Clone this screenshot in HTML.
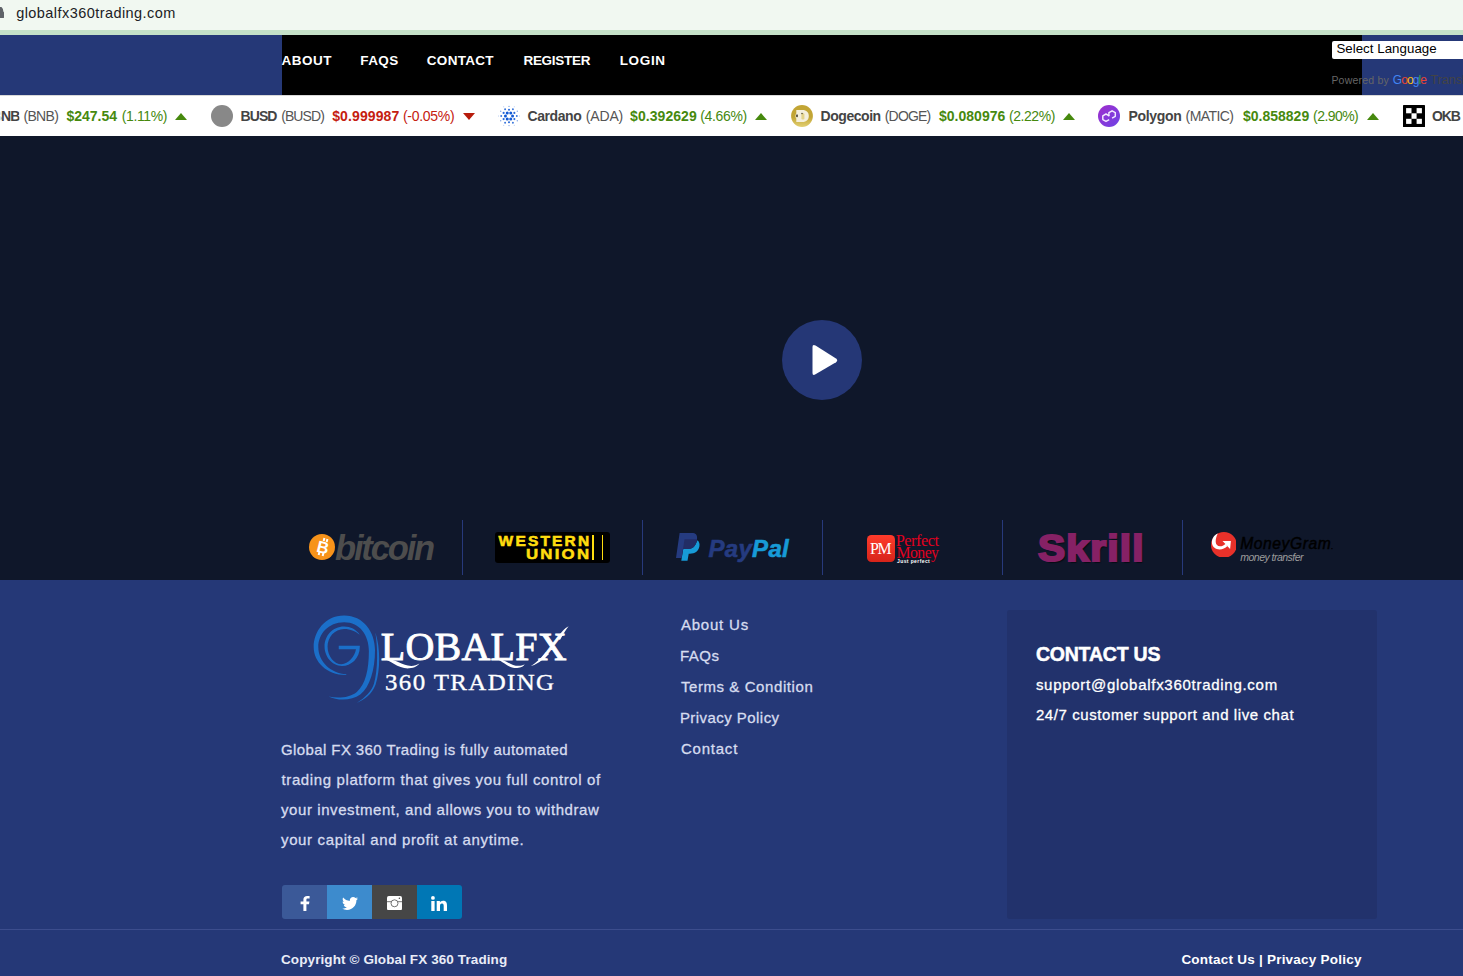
<!DOCTYPE html>
<html lang="en">
<head>
<meta charset="utf-8">
<title>Global FX 360 Trading</title>
<style>
*{box-sizing:border-box;margin:0;padding:0}
html,body{width:1463px;height:976px;overflow:hidden;background:#253877}
body{position:relative;font-family:"Liberation Sans",sans-serif}
.abs,.t,.b{position:absolute}
.t{white-space:nowrap;line-height:1;font-family:"Liberation Sans",sans-serif}
.serif{font-family:"Liberation Serif",serif}
/* bands */
#addr{left:0;top:0;width:1463px;height:30px;background:#f1f8f1}
#strip{left:0;top:30px;width:1463px;height:5px;background:#c5e1c8}
#nav{left:0;top:35px;width:1463px;height:60px;background:#253877}
#navblack{left:282px;top:35px;width:1080px;height:60px;background:#000}
#ticker{left:0;top:95px;width:1463px;height:41px;background:#fff;border-top:1px solid #d9d9d9;overflow:hidden}
#hero{left:0;top:136px;width:1463px;height:444px;background:#0f172a}
#footer{left:0;top:580px;width:1463px;height:396px;background:#253877}
/* ticker */
.tk{font-size:14px;top:13.2px}
.nm{font-weight:bold;color:#444}
.sy{color:#555}
.gp{font-weight:bold;color:#46890e}
.gc{color:#46890e}
.rp{font-weight:bold;color:#c5200f}
.rc{color:#c5200f}
.up{width:0;height:0;border-left:6px solid transparent;border-right:6px solid transparent;border-bottom:7px solid #46890e;top:17px}
.dn{width:0;height:0;border-left:6px solid transparent;border-right:6px solid transparent;border-top:7px solid #b71c0c;top:17px}
.ico{width:22px;height:22px;top:9px;border-radius:50%}
/* nav */
.nv{font-size:13.5px;font-weight:bold;color:#fff;top:54px}
/* footer text */
.p{font-size:15px;color:#d6dcef;-webkit-text-stroke:0.3px #d6dcef}
.lk{font-size:15px;color:#d6dcef;-webkit-text-stroke:0.3px #d6dcef}
.w{font-size:15px;color:#fff;-webkit-text-stroke:0.3px #fff}
.div{width:1px;height:55px;top:520px;background:#27397b}
</style>
</head>
<body>
<!-- browser address bar -->
<div class="abs" id="addr"></div>
<div class="abs" id="strip"></div>
<svg class="abs" style="left:-7px;top:6.5px" width="11" height="11.5" viewBox="0 0 11 11.5"><path d="M1.5 4.6 L1.5 3.6 A3.6 3.6 0 0 1 10.2 3.6 L10.2 4.6 Q11 4.7 11 5.6 L11 10.3 Q11 11.2 10 11.2 L1 11.2 Q0 11.2 0 10.3 L0 5.6 Q0 4.7 1.5 4.6 Z" fill="#5f6368"/></svg>
<span class="t" id="url" style="left:16.2px;top:5.5px;font-size:14.5px;color:#202124;letter-spacing:0.44px">globalfx360trading.com</span>

<!-- nav -->
<div class="abs" id="nav"></div>
<div class="abs" id="navblack"></div>
<span class="t nv" id="n1" style="left:281.4px;letter-spacing:0.50px;top:53.7px">ABOUT</span>
<span class="t nv" id="n2" style="left:360.3px;letter-spacing:0.40px;top:53.7px">FAQS</span>
<span class="t nv" id="n3" style="left:426.8px;letter-spacing:0.30px;top:53.7px">CONTACT</span>
<span class="t nv" id="n4" style="left:523.4px;letter-spacing:-0.26px;top:53.7px">REGISTER</span>
<span class="t nv" id="n5" style="left:619.7px;letter-spacing:0.66px;top:53.7px">LOGIN</span>

<!-- translate widget -->
<div class="abs" style="left:1332px;top:40.6px;width:140px;height:18px;background:#fff;border-radius:2px"></div>
<span class="t" id="sel" style="left:1336.4px;top:42.3px;font-size:13.3px;color:#000;letter-spacing:0.03px">Select Language</span>
<span class="t" id="pw" style="left:1331.4px;top:74.7px;font-size:10.5px;color:#666;letter-spacing:0.22px">Powered by</span>
<span class="t" id="gg" style="left:1392.7px;top:73.5px;font-size:12px;font-weight:normal;letter-spacing:-0.90px"><span style="color:#4285f4">G</span><span style="color:#ea4335">o</span><span style="color:#fbbc05">o</span><span style="color:#4285f4">g</span><span style="color:#34a853">l</span><span style="color:#ea4335">e</span></span>
<span class="t" id="tr" style="left:1430.5px;top:73.8px;font-size:12.5px;color:#444">Translate</span>

<!-- ticker -->
<div class="abs" id="ticker">
<span class="t tk nm" id="k1" style="left:-8.2px;letter-spacing:-0.9px;clip-path:inset(0 0 0 9px)">BNB</span>
<span class="t tk sy" id="k2" style="left:23.4px;letter-spacing:-0.65px">(BNB)</span>
<span class="t tk gp" id="k3" style="left:66.4px;letter-spacing:0.00px">$247.54</span>
<span class="t tk gc" id="k4" style="left:121.8px;letter-spacing:-0.38px">(1.11%)</span>
<div class="abs up" style="left:175px"></div>
<div class="abs ico" style="left:210.5px;background:#888"></div>
<span class="t tk nm" id="k5" style="left:240.6px;letter-spacing:-0.94px">BUSD</span>
<span class="t tk sy" id="k6" style="left:281.2px;letter-spacing:-0.92px">(BUSD)</span>
<span class="t tk rp" id="k7" style="left:332.2px;letter-spacing:0.11px">$0.999987</span>
<span class="t tk rc" id="k8" style="left:403.0px;letter-spacing:-0.29px">(-0.05%)</span>
<div class="abs dn" style="left:463px"></div>
<svg class="abs" style="left:498px;top:9px" width="22" height="22" viewBox="-11 -11 22 22" fill="#1259d4"><circle cx="3.55" cy="0.00" r="1.5"/><circle cx="7.80" cy="0.00" r="0.95" opacity="0.85"/><circle cx="10.60" cy="0.00" r="0.55" opacity="0.35"/><circle cx="5.37" cy="3.10" r="1.05" opacity="0.9"/><circle cx="8.31" cy="4.80" r="0.7" opacity="0.55"/><circle cx="1.78" cy="3.07" r="1.5"/><circle cx="3.90" cy="6.75" r="0.95" opacity="0.85"/><circle cx="5.30" cy="9.18" r="0.55" opacity="0.35"/><circle cx="0.00" cy="6.20" r="1.05" opacity="0.9"/><circle cx="0.00" cy="9.60" r="0.7" opacity="0.55"/><circle cx="-1.77" cy="3.07" r="1.5"/><circle cx="-3.90" cy="6.75" r="0.95" opacity="0.85"/><circle cx="-5.30" cy="9.18" r="0.55" opacity="0.35"/><circle cx="-5.37" cy="3.10" r="1.05" opacity="0.9"/><circle cx="-8.31" cy="4.80" r="0.7" opacity="0.55"/><circle cx="-3.55" cy="0.00" r="1.5"/><circle cx="-7.80" cy="0.00" r="0.95" opacity="0.85"/><circle cx="-10.60" cy="0.00" r="0.55" opacity="0.35"/><circle cx="-5.37" cy="-3.10" r="1.05" opacity="0.9"/><circle cx="-8.31" cy="-4.80" r="0.7" opacity="0.55"/><circle cx="-1.78" cy="-3.07" r="1.5"/><circle cx="-3.90" cy="-6.75" r="0.95" opacity="0.85"/><circle cx="-5.30" cy="-9.18" r="0.55" opacity="0.35"/><circle cx="-0.00" cy="-6.20" r="1.05" opacity="0.9"/><circle cx="-0.00" cy="-9.60" r="0.7" opacity="0.55"/><circle cx="1.78" cy="-3.07" r="1.5"/><circle cx="3.90" cy="-6.75" r="0.95" opacity="0.85"/><circle cx="5.30" cy="-9.18" r="0.55" opacity="0.35"/><circle cx="5.37" cy="-3.10" r="1.05" opacity="0.9"/><circle cx="8.31" cy="-4.80" r="0.7" opacity="0.55"/></svg>
<span class="t tk nm" id="k9" style="left:527.5px;letter-spacing:-0.42px">Cardano</span>
<span class="t tk sy" id="k10" style="left:585.8px;letter-spacing:-0.17px">(ADA)</span>
<span class="t tk gp" id="k11" style="left:630.1px;letter-spacing:0.06px">$0.392629</span>
<span class="t tk gc" id="k12" style="left:700.2px;letter-spacing:-0.33px">(4.66%)</span>
<div class="abs up" style="left:754.5px"></div>
<svg class="abs" style="left:790.5px;top:9px" width="22" height="22" viewBox="0 0 22 22"><defs><linearGradient id="dg" x1="0" y1="0" x2="0" y2="1"><stop offset="0.55" stop-color="#c2a535"/><stop offset="1" stop-color="#e2cf72"/></linearGradient></defs><circle cx="11" cy="11" r="10.9" fill="url(#dg)"/><path d="M5.3 5 L11.5 5 C15.5 5 17.8 7.4 17.8 11 C17.8 14.6 15.5 17 11.5 17 L5.3 17 L5.3 13.5 C4.2 12.5 4.2 9.5 5.3 8.5 Z" fill="#f4efdc"/><rect x="10.4" y="8.2" width="3" height="6.2" rx="1.2" fill="#e3d38a"/><ellipse cx="6" cy="10.8" rx="0.8" ry="1.5" fill="#2a2414"/><circle cx="11" cy="8.5" r="0.7" fill="#3a331c"/></svg>
<span class="t tk nm" id="k13" style="left:820.6px;letter-spacing:-0.46px">Dogecoin</span>
<span class="t tk sy" id="k14" style="left:884.8px;letter-spacing:-0.84px">(DOGE)</span>
<span class="t tk gp" id="k15" style="left:938.9px;letter-spacing:0.03px">$0.080976</span>
<span class="t tk gc" id="k16" style="left:1009.0px;letter-spacing:-0.45px">(2.22%)</span>
<div class="abs up" style="left:1062.5px"></div>
<svg class="abs" style="left:1098.1px;top:9px" width="22" height="22" viewBox="0 0 22 22"><defs><linearGradient id="pg" x1="0" y1="0" x2="1" y2="1"><stop offset="0.1" stop-color="#9a2fce"/><stop offset="0.9" stop-color="#7341e4"/></linearGradient></defs><circle cx="11" cy="11" r="11" fill="url(#pg)"/><g fill="none" stroke="#f3eaff" stroke-width="1.45" stroke-linejoin="round"><path d="M11.20 10.85 L8.00 9.00 L4.80 10.85 L4.80 14.55 L8.00 16.40 L11.20 14.55 L11.20 14.55"/><path d="M10.90 11.35 L10.90 7.65 L14.10 5.80 L17.30 7.65 L17.30 11.35 L14.10 13.20 L14.10 13.20"/></g></svg>
<span class="t tk nm" id="k17" style="left:1128.5px;letter-spacing:-0.33px">Polygon</span>
<span class="t tk sy" id="k18" style="left:1185.6px;letter-spacing:-0.59px">(MATIC)</span>
<span class="t tk gp" id="k19" style="left:1243.0px;letter-spacing:0.00px">$0.858829</span>
<span class="t tk gc" id="k20" style="left:1313.1px;letter-spacing:-0.57px">(2.90%)</span>
<div class="abs up" style="left:1366.5px"></div>
<svg class="abs" style="left:1402.5px;top:9px" width="22" height="22" viewBox="0 0 22 22"><rect width="22" height="22" rx="0.6" fill="#000"/><rect x="3.1" y="3.1" width="5.4" height="5.2" fill="#fff"/><rect x="13.6" y="3.1" width="5.3" height="5.2" fill="#fff"/><rect x="8.5" y="8.3" width="5.1" height="5.5" fill="#fff"/><rect x="3.1" y="13.8" width="5.4" height="5.1" fill="#fff"/><rect x="13.6" y="13.8" width="5.3" height="5.1" fill="#fff"/></svg>
<span class="t tk nm" id="k21" style="left:1431.9px;letter-spacing:-1.10px">OKB</span>
</div>

<!-- hero / video -->
<div class="abs" id="hero"></div>
<div class="abs" style="left:782px;top:320px;width:80px;height:80px;border-radius:50%;background:#253776"></div>
<svg class="abs" style="left:782px;top:320px" width="80" height="80" viewBox="0 0 80 80"><path d="M30.5 27 L30.5 53 Q30.5 56 33.5 54.3 L54 42.2 Q56.5 40.4 54 38.6 L33.5 25.6 Q30.5 24 30.5 27 Z" fill="#fff"/></svg>

<!-- payment logos -->
<div class="abs div" style="left:462px"></div>
<div class="abs div" style="left:642px"></div>
<div class="abs div" style="left:822px"></div>
<div class="abs div" style="left:1002px"></div>
<div class="abs div" style="left:1182px"></div>
<!-- bitcoin -->
<div class="abs" style="left:308.8px;top:533.8px;width:26.4px;height:26.6px;border-radius:50%;background:#f7931a"></div>
<span class="t" id="btcB" style="left:317.3px;top:539.3px;font-size:16.5px;font-weight:bold;color:#fff;transform:rotate(14deg)">B</span>
<div class="abs" style="left:322.6px;top:538.2px;width:1.7px;height:3.2px;background:#fff;transform:rotate(14deg)"></div>
<div class="abs" style="left:325.9px;top:539px;width:1.7px;height:3.2px;background:#fff;transform:rotate(14deg)"></div>
<div class="abs" style="left:318.3px;top:552.2px;width:1.7px;height:3.2px;background:#fff;transform:rotate(14deg)"></div>
<div class="abs" style="left:321.6px;top:553px;width:1.7px;height:3.2px;background:#fff;transform:rotate(14deg)"></div>
<span class="t" id="btc" style="left:335.0px;top:531.0px;font-size:34.5px;font-weight:bold;font-style:italic;color:#4d4d4d;letter-spacing:-2.15px">bitcoin</span>
<!-- western union -->
<div class="abs" style="left:494.8px;top:532px;width:115.3px;height:30.5px;background:#000;border-radius:3px"></div>
<span class="t" id="wu1" style="left:498.6px;top:532.9px;font-size:15.5px;font-weight:bold;color:#ffdd0f;-webkit-text-stroke:0.6px #ffdd0f;letter-spacing:2.18px">WESTERN</span>
<span class="t" id="wu2" style="left:526.1px;top:546.9px;font-size:14px;font-weight:bold;color:#ffdd0f;-webkit-text-stroke:0.5px #ffdd0f;transform:scaleX(1.2);transform-origin:0 0;letter-spacing:1.85px">UNION</span>
<div class="abs" style="left:591.5px;top:534.8px;width:2.1px;height:25.1px;background:#ffdd0f"></div>
<div class="abs" style="left:601.6px;top:534.8px;width:1.7px;height:25.1px;background:#ffdd0f"></div>
<!-- paypal -->
<svg class="abs" style="left:675.8px;top:533px" width="24" height="28.2" viewBox="0 0 24 28.2"><path d="M21.6 7.3 C23.2 8.8 23.9 10.8 23.4 13.5 C22.3 18.5 18.8 20.7 14 20.7 L12.7 20.7 L11.5 27.8 L5.3 27.8 L7.2 15.9 L12.5 15.9 C16 15.9 18.5 14 20 10.5 C20.5 9.3 21 8.3 21.6 7.3 Z" fill="#179bd7"/><path d="M3.6 0 L16 0 C19.5 0 21.3 2 21.1 5 C21 7.5 20.5 9 20 10.5 C18.5 14 16 15.9 12.5 15.9 L7.2 15.9 L5.6 25 L0 25 Z" fill="#253b80"/><path d="M8.5 6.3 L21 6.3 C20.8 8 20.4 9.4 20 10.5 C18.5 14 16 15.9 12.5 15.9 L7.2 15.9 L5.8 24 Z" fill="#222d65"/></svg>
<span class="t" id="pp" style="left:708.4px;top:536.5px;font-size:24px;font-weight:bold;font-style:italic;letter-spacing:0.32px"><span style="color:#253b80;-webkit-text-stroke:0.6px #253b80">Pay</span><span style="color:#179bd7;-webkit-text-stroke:0.6px #179bd7">Pal</span></span>
<!-- perfect money -->
<div class="abs" style="left:867px;top:534.7px;width:27.5px;height:27.5px;border-radius:4.5px;background:linear-gradient(#ff3b2b,#d6241a)"></div>
<span class="t serif" id="pm0" style="left:869.9px;top:541.1px;font-size:15.9px;color:#fff;letter-spacing:-1.30px">PM</span>
<span class="t serif" id="pm1" style="left:895.7px;top:532.8px;font-size:16.3px;color:#e2001f;letter-spacing:-0.48px">Perfect</span>
<span class="t serif" id="pm2" style="left:896.6px;top:545.2px;font-size:15.8px;color:#e2001f;letter-spacing:-0.60px">Money</span>
<span class="t" id="pm3" style="left:897.0px;top:558.5px;font-size:5px;font-weight:bold;color:#fff;letter-spacing:0.40px">Just perfect</span>
<!-- skrill -->
<span class="t" id="sk" style="left:1037.8px;top:530.2px;font-size:37px;font-weight:bold;color:#862165;-webkit-text-stroke:2.2px #862165;text-shadow:1.5px 1.5px 1px rgba(0,0,0,.55);letter-spacing:1.08px;transform:scaleX(1.1);transform-origin:0 0">Skrill</span>
<!-- moneygram -->
<svg class="abs" style="left:1210.6px;top:531.6px" width="25.8" height="25.8" viewBox="0 0 25.8 25.8"><circle cx="12.9" cy="12.9" r="12.9" fill="#e8312a"/><path d="M6.8 1.5 C2.6 3.2 0.5 7.5 1 11.5 C1.6 15.2 4.6 17.4 8.6 17.4 C11.6 17.4 14.2 16 16.5 13.9 L14.4 11.9 C12.6 13.5 11 14.2 9.1 14.2 C6.6 14.2 4.8 12.5 4.7 10 C4.6 7 5.4 4.2 6.8 1.5 Z M11.5 8.9 L19.9 8.9 L19.1 17.1 L16.7 14.4 L14.2 11.7 Z" fill="#fff"/></svg>
<span class="t" id="mg1" style="left:1240.3px;top:536.1px;font-size:15.6px;font-style:italic;color:#000;-webkit-text-stroke:0.45px #000;letter-spacing:0.57px">MoneyGram<span style="font-size:7px">.</span></span>
<span class="t" id="mg2" style="left:1240.3px;top:552px;font-size:10.5px;font-style:italic;color:#9c9c9c;letter-spacing:-0.53px">money transfer</span>

<!-- footer -->
<div class="abs" id="footer"></div>
<!-- logo -->
<svg class="abs" style="left:300px;top:605px" width="140" height="105" viewBox="0 0 1301 976" fill="#1b6fc9"><title>G</title>
<path d="M265 850 C350 892 480 892 560 832 C650 762 697 600 697 420 C697 250 590 98 410 98 C230 98 127 250 127 390 C127 530 250 652 430 650 L430 643 C290 636 170 530 170 390 C170 270 262 160 410 160 C556 160 640 280 640 430 C640 600 608 740 528 808 C458 864 350 870 265 850 Z"/>
<path d="M700 255 C748 400 748 600 702 742 C666 832 600 882 528 910 C606 860 668 800 688 730 C724 600 724 400 700 255 Z"/>
<path d="M556 276 C520 226 470 200 410 200 C300 200 228 290 228 385 C228 480 300 566 390 566 C472 566 556 500 556 385 L556 378 L360 378 L360 412 L520 412 C510 480 450 546 385 550 C320 550 256 480 256 385 C256 300 320 222 410 222 C470 222 520 246 556 276 Z"/>
</svg>
<svg class="abs" style="left:375px;top:615px" width="200" height="90" viewBox="0 0 1463 658" fill="#fff"><path d="M60 318 C110 330 170 395 250 390 C290 388 315 370 325 355 C300 372 270 375 240 370 C180 355 130 315 60 318 Z"/><path d="M880 318 C930 330 970 390 1040 388 C1070 386 1090 372 1095 360 C1070 375 1040 375 1010 365 C960 345 930 315 880 318 Z"/><path d="M1353 183 Q1390 117 1416 83 Q1375 102 1335 168 Z"/><path d="M1251 271 Q1192 344 1140 373 Q1200 358 1273 285 Z"/></svg>
<span class="t serif" id="lg1" style="left:380.7px;top:626.6px;font-size:40px;color:#fff;-webkit-text-stroke:0.9px #fff;letter-spacing:0.26px">LOBALFX</span>
<span class="t serif" id="lg2" style="left:384.9px;top:670.6px;font-size:23.5px;color:#fff;-webkit-text-stroke:0.35px #fff;transform:scaleX(1.06);transform-origin:0 0;letter-spacing:1.31px">360 TRADING</span>
<!-- about paragraph -->
<span class="t p" id="p1" style="left:281.0px;top:742.3px;letter-spacing:0.40px">Global FX 360 Trading is fully automated</span>
<span class="t p" id="p2" style="left:281.5px;top:772.3px;letter-spacing:0.62px">trading platform that gives you full control of</span>
<span class="t p" id="p3" style="left:281.0px;top:802.3px;letter-spacing:0.58px">your investment, and allows you to withdraw</span>
<span class="t p" id="p4" style="left:281.0px;top:832.3px;letter-spacing:0.64px">your capital and profit at anytime.</span>
<!-- social -->
<div class="abs" style="left:282px;top:885px;width:45px;height:34px;background:#3b5998;border-radius:3px 0 0 3px"></div>
<div class="abs" style="left:327px;top:885px;width:45px;height:34px;background:#3d8bcd"></div>
<div class="abs" style="left:372px;top:885px;width:45px;height:34px;background:#464646"></div>
<div class="abs" style="left:417px;top:885px;width:45px;height:34px;background:#0077b5;border-radius:0 3px 3px 0"></div>
<svg class="abs" style="left:300px;top:895.5px" width="10" height="15" viewBox="0 0 10 15"><path d="M6.4 15 L6.4 8.3 L9 8.3 L9.4 5.5 L6.4 5.5 L6.4 3.9 C6.4 3 6.7 2.5 7.9 2.5 L9.6 2.5 L9.6 0.1 C9.3 0.1 8.3 0 7.2 0 C4.9 0 3.4 1.4 3.4 3.6 L3.4 5.5 L0.6 5.5 L0.6 8.3 L3.4 8.3 L3.4 15 Z" fill="#fff"/></svg>
<svg class="abs" style="left:342px;top:896.5px" width="16" height="13" viewBox="0 0 16 13"><path d="M16 1.5 C15.4 1.8 14.8 2 14.1 2.1 C14.8 1.7 15.3 1 15.6 0.2 C14.9 0.6 14.2 0.9 13.5 1 C12.9 0.4 12 0 11.1 0 C9.3 0 7.8 1.5 7.8 3.3 C7.8 3.6 7.8 3.8 7.9 4 C5.2 3.9 2.7 2.6 1.1 0.6 C0.8 1.1 0.7 1.7 0.7 2.3 C0.7 3.4 1.3 4.4 2.1 5 C1.6 5 1.1 4.8 0.6 4.6 C0.6 6.2 1.8 7.6 3.3 7.9 C2.8 8 2.3 8 1.8 7.9 C2.2 9.2 3.4 10.2 4.9 10.2 C3.5 11.3 1.8 11.8 0 11.6 C1.5 12.5 3.2 13 5 13 C11.1 13 14.4 8 14.4 3.6 L14.4 3.2 C15 2.7 15.6 2.1 16 1.5 Z" fill="#fff"/></svg>
<svg class="abs" style="left:387.1px;top:895.8px" width="15" height="14.4" viewBox="0 0 15 14.4"><rect width="15" height="14.4" rx="1.8" fill="#fff"/><g stroke="#464646" stroke-width="0.75" fill="none"><circle cx="7.5" cy="7.3" r="3.5"/><path d="M0 5.7 L4.3 5.7 M10.7 5.7 L15 5.7"/></g><circle cx="12.4" cy="2.2" r="0.75" fill="#464646"/></svg>
<svg class="abs" style="left:431px;top:895.5px" width="16" height="15" viewBox="0 0 16 15"><path d="M0.3 5 L3.6 5 L3.6 15 L0.3 15 Z M1.95 0 A1.9 1.9 0 1 1 1.95 3.8 A1.9 1.9 0 1 1 1.95 0 Z M5.7 5 L8.9 5 L8.9 6.4 C9.4 5.5 10.5 4.7 12.1 4.7 C15.4 4.7 16 6.9 16 9.7 L16 15 L12.7 15 L12.7 10.3 C12.7 9.1 12.7 7.6 11 7.6 C9.3 7.6 9 8.9 9 10.2 L9 15 L5.7 15 Z" fill="#fff"/></svg>
<!-- links -->
<span class="t lk" id="l1" style="left:680.9px;top:617.2px;letter-spacing:0.80px">About Us</span>
<span class="t lk" id="l2" style="left:679.9px;top:648.2px;letter-spacing:0.50px">FAQs</span>
<span class="t lk" id="l3" style="left:680.9px;top:679.2px;letter-spacing:0.58px">Terms &amp; Condition</span>
<span class="t lk" id="l4" style="left:679.9px;top:710.2px;letter-spacing:0.45px">Privacy Policy</span>
<span class="t lk" id="l5" style="left:680.9px;top:741.2px;letter-spacing:0.79px">Contact</span>
<!-- contact box -->
<div class="abs" style="left:1007px;top:610px;width:370px;height:309px;background:#22326c;border-radius:3px"></div>
<span class="t" id="c1" style="left:1035.9px;top:645.4px;font-size:19.5px;font-weight:bold;color:#fff;-webkit-text-stroke:0.5px #fff;letter-spacing:-0.20px">CONTACT US</span>
<span class="t w" id="c2" style="left:1035.9px;top:677.3px;letter-spacing:0.72px">support@globalfx360trading.com</span>
<span class="t w" id="c3" style="left:1035.9px;top:707.4px;letter-spacing:0.59px">24/7 customer support and live chat</span>
<!-- bottom bar -->
<div class="abs" style="left:0;top:929px;width:1463px;height:1px;background:#3c4d8d"></div>
<span class="t" id="cp" style="left:281.0px;top:953.1px;font-size:13.5px;font-weight:bold;color:#e9ecf7;letter-spacing:0.10px">Copyright © Global FX 360 Trading</span>
<span class="t" id="bl" style="left:1181.4px;top:953.1px;font-size:13.5px;font-weight:bold;color:#fff;letter-spacing:0.23px">Contact Us | Privacy Policy</span>
</body>
</html>
